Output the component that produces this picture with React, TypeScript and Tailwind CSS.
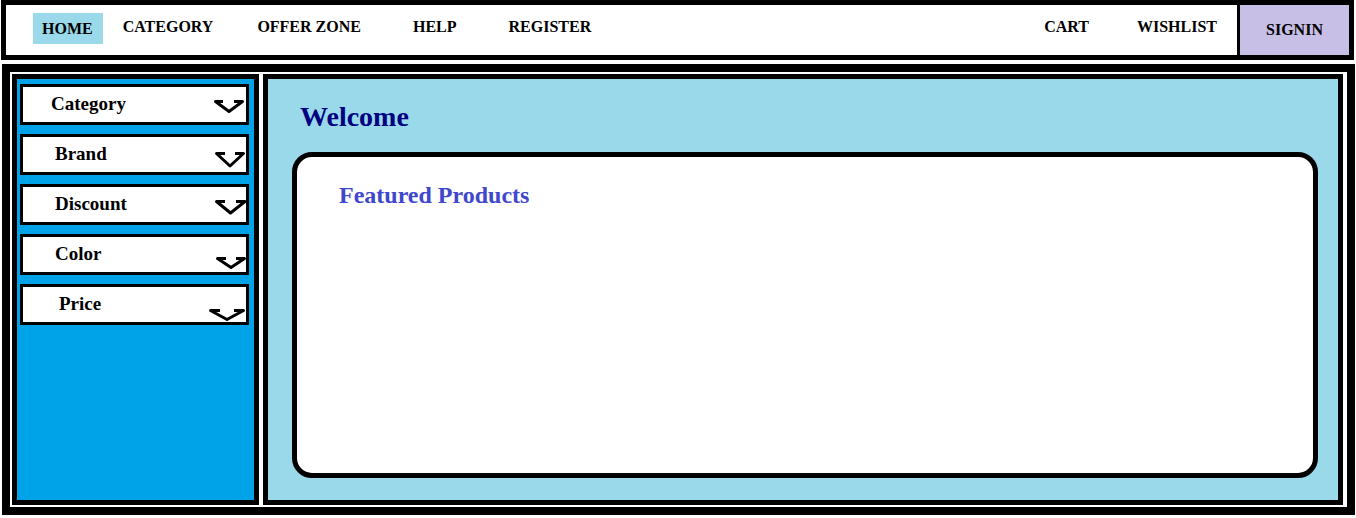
const primaryLinks = [
  { label: "CATEGORY", spacing: "ml-5" },
  { label: "OFFER ZONE", spacing: "ml-11" },
  { label: "HELP", spacing: "ml-13" },
  { label: "REGISTER", spacing: "ml-13" },
];

// Each arrow is drawn in a 40x35 box at the right end of its filter row.
const filters = [
  { label: "Category", indent: "pl-7", arrow: "M17 14.5H9.5L23 24.5L36.5 14.5H28" },
  { label: "Brand", indent: "pl-8", arrow: "M19 16.5H10.5L24 29L37.5 16.5H29" },
  { label: "Discount", indent: "pl-8", arrow: "M19 14.5H10.5L24.5 26L39 14.5H30" },
  { label: "Color", indent: "pl-8", arrow: "M20 21.5H11.5L25 30.5L38.5 21.5H30" },
  { label: "Price", indent: "pl-9", arrow: "M14 23.5H4.5L21 32.5L37.5 23.5H28" },
];

function Header() {
  return (
    <header className="mr-0.5 ml-px flex h-15 border-5 border-black bg-white text-base font-bold">
      <nav className="flex flex-1 items-start pt-2 pl-[27px] leading-7 whitespace-nowrap">
        <a href="#home" className="bg-[#99d9ea] pr-2.5 pl-[9px] leading-[31px]">
          HOME
        </a>
        {primaryLinks.map((link) => (
          <a key={link.label} href="#" className={link.spacing}>
            {link.label}
          </a>
        ))}
        <a href="#cart" className="ml-auto">
          CART
        </a>
        <a href="#wishlist" className="mr-5 ml-12">
          WISHLIST
        </a>
      </nav>
      <a
        href="#signin"
        className="flex w-28 items-center justify-center border-l-3 border-black bg-[#c8bfe7]"
      >
        SIGNIN
      </a>
    </header>
  );
}

function Sidebar() {
  return (
    <aside className="w-[247px] shrink-0 border-5 border-black bg-[#00a2e8] py-[5px] pr-[5px] pl-[3px]">
      <div className="flex flex-col gap-[9px]">
        {filters.map((filter) => (
          <button
            key={filter.label}
            type="button"
            className={`flex h-[41px] items-center justify-between border-3 border-black bg-white text-left text-[19px] font-bold ${filter.indent}`}
          >
            {filter.label}
            <svg
              width="40"
              height="35"
              viewBox="0 0 40 35"
              className="overflow-visible"
              fill="none"
              stroke="black"
              strokeWidth="3"
              strokeLinejoin="round"
              aria-hidden="true"
            >
              <path d={filter.arrow} />
            </svg>
          </button>
        ))}
      </div>
    </aside>
  );
}

export default function App() {
  return (
    <div className="bg-white pb-[3px] font-['Liberation_Serif','Times_New_Roman',serif] text-black">
      <Header />
      <div className="mt-1 mr-px ml-0.5 flex gap-1 border-8 border-black bg-white py-0.5 pr-1 pl-0.5">
        <Sidebar />
        <main className="flex-1 border-5 border-black bg-[#99d9ea] pt-5 pr-5 pb-[22px] pl-6">
          <h1 className="mb-[17px] pl-2 text-[28px] leading-9 font-bold text-[#000080]">
            Welcome
          </h1>
          <section className="min-h-[326px] rounded-[20px] border-5 border-black bg-white pt-[22px] pl-[42px]">
            <h2 className="text-2xl leading-8 font-bold text-[#3f48cc]">
              Featured Products
            </h2>
          </section>
        </main>
      </div>
    </div>
  );
}
